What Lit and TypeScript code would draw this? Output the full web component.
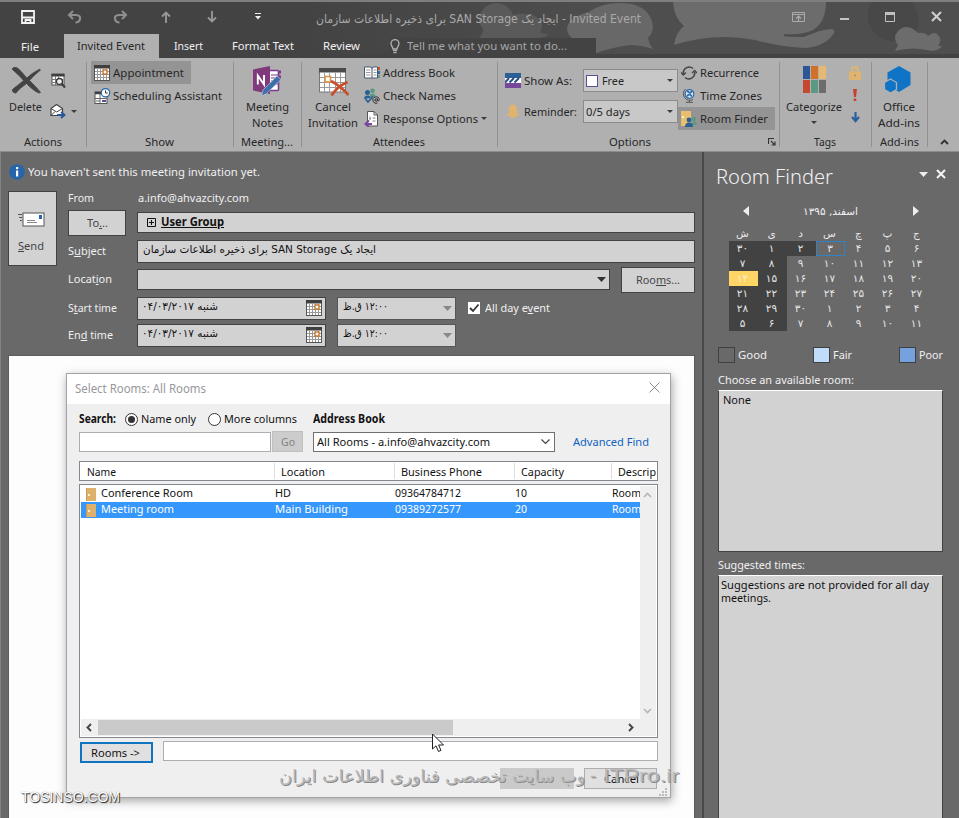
import { LitElement, html, css, svg } from "lit";
import { customElement, property } from "lit/decorators.js";
import { classMap } from "lit/directives/class-map.js";

/* A single line of text condensed or widened to the given width. */
@customElement("fit-text")
class FitText extends LitElement {
  @property({ type: Number }) w = 0;
  static styles = css`
    :host { display: block; flex: none; white-space: nowrap; text-align: left; }
    .in { display: inline-block; transform-origin: 0 50%; }
  `;
  render() {
    return html`<span class="in"><slot></slot></span>`;
  }
  firstUpdated() {
    const el = this.renderRoot.querySelector(".in") as HTMLElement;
    const natural = el.getBoundingClientRect().width;
    this.style.width = this.w + "px";
    if (natural > 0) el.style.transform = `scaleX(${this.w / natural})`;
  }
}

const t = (text: unknown, w: number) => html`<fit-text w=${w}>${text}</fit-text>`;
const fa = (text: unknown, w: number) => html`<fit-text class="fa" w=${w}><span dir="rtl">${text}</span></fit-text>`;

const icon = (w: number, h: number, body: unknown) =>
  html`<svg class="ic" width=${w} height=${h} viewBox="0 0 ${w} ${h}">${body}</svg>`;

const triangle = (w: number, h: number, fill: string) =>
  icon(w, h, svg`<path d="M0 0H${w}L${w / 2} ${h}Z" fill=${fill}/>`);

const calendar = icon(16, 16, svg`
  <rect x=".5" y=".5" width="15" height="15" fill="#fff" stroke="#555"/>
  <rect width="16" height="3.500" fill="#3f3f3f"/>
  <path d="M3.500 4V15M6.500 4V15M9.500 4V15M12.500 4V15M1 6.500H15M1 9.500H15M1 12.500H15" stroke="#999"/>
  <rect x="9" y="5" width="4" height="4" fill="#fff" stroke="#c8762a" stroke-width="1.400"/>`);

const icons = {
  save: icon(14, 14, svg`<path d="M1 1H13V13H1Z" fill="none" stroke="#f3f3f3" stroke-width="1.800"/><path d="M1 7.500H13M4.500 13V10H9.500V13" fill="none" stroke="#f3f3f3" stroke-width="1.800"/>`),
  undo: icon(15, 14, svg`<path d="M6 1L2 5L6 9M2 5H9C12.500 5 13.500 7 13 9C12.500 11 11 12.500 8.500 12.500" fill="none" stroke="#8f8f8f" stroke-width="2.100"/>`),
  redo: icon(15, 14, svg`<path d="M9 1L13 5L9 9M13 5H6C2.500 5 1.500 7 2 9C2.500 11 4 12.500 6.500 12.500" fill="none" stroke="#8f8f8f" stroke-width="2.100"/>`),
  up: icon(10, 12, svg`<path d="M5 12V2M1 5.500L5 1.500L9 5.500" fill="none" stroke="#979797" stroke-width="1.900"/>`),
  down: icon(10, 12, svg`<path d="M5 0V10M1 6.500L5 10.500L9 6.500" fill="none" stroke="#979797" stroke-width="1.900"/>`),
  more: icon(6, 7, svg`<path d="M0 .5H6" stroke="#eee"/><path d="M0 3H6L3 6.500Z" fill="#eee"/>`),
  ribbonOpts: icon(13, 10, svg`<path d="M.5 .5H12.500V9.500H.5ZM.5 2.500H12.500" fill="none" stroke="#aaa"/><path d="M6.500 9V4.500M4 6.500L6.500 4L9 6.500" fill="none" stroke="#aaa" stroke-width="1.200"/>`),
  min: icon(9, 10, svg`<path d="M0 7H9" stroke="#c4c4c4" stroke-width="2"/>`),
  max: icon(10, 10, svg`<path d="M.5 .5H9.500V9.500H.5Z" fill="none" stroke="#c0c0c0"/><path d="M0 1.500H10" stroke="#c0c0c0" stroke-width="3"/>`),
  close: icon(11, 11, svg`<path d="M1 1L10 10M10 1L1 10" stroke="#cfcfcf" stroke-width="2.100"/>`),
  bulb: icon(10, 15, svg`<path d="M3 10C3 8 1 7 1 4.500A4 3.800 0 0 1 9 4.500C9 7 7 8 7 10Z" fill="none" stroke="#b4b4b4" stroke-width="1.300"/><path d="M3 11.700H7M3.500 13.700H6.500" stroke="#b4b4b4" stroke-width="1.300"/>`),
  del: icon(29, 27, svg`<path d="M0 2Q1 .5 3 0C7 1 11 7 15 11C18 8 22 5 27.500 2.200L28.500 3C24 7 20 10 17.500 13.500C21 17 26 22 28.500 25.500L27 26C22 24 18 20 14.500 16.500C10 20 7 22 4 26C2 26 0 25 .5 22.500C3 20 8 17 11.500 13.500C9 10 3 5 0 2Z" fill="#434343" stroke="#434343" stroke-width=".8"/>`),
  calSearch: icon(16, 16, svg`<rect x="2" y="1" width="12" height="11" fill="#fff" stroke="#505050"/><rect x="1.500" y="1" width="13" height="2.500" fill="#3f3f3f"/><path d="M5.500 3V12M8.500 3V12M2 6.500H13M2 9.500H13" stroke="#777"/><circle cx="9.500" cy="8.500" r="3" fill="#eee" stroke="#3c3c3c" stroke-width="1.300"/><path d="M11.500 10.500L15 14.500" stroke="#3c3c3c" stroke-width="2"/>`),
  forward: icon(16, 16, svg`<path d="M1 5.500L6.500 1.500L12.500 5.500V12.500H1Z" fill="#fff" stroke="#444" stroke-width="1.200"/><path d="M1 5.500L6.700 9L12.500 5.500M1 12.500L5 8.500" fill="none" stroke="#444"/><path d="M7 12H14M11 9L14.500 12L11 15" fill="none" stroke="#2b5797" stroke-width="2"/>`),
  sched: icon(17, 16, svg`<rect x="1" y="4" width="12" height="11.500" fill="#fff" stroke="#555"/><path d="M1 5H9" stroke="#3f3f3f" stroke-width="2.500"/><path d="M6 6V15M1 10.500H13M2 13H6" stroke="#666"/><path d="M8 13H12" stroke="#5b4b9b" stroke-width="2"/><circle cx="11.500" cy="4.700" r="4.200" fill="#fff" stroke="#2e6aa8" stroke-width="1.300"/><path d="M11.500 2.300V5H13.700" fill="none" stroke="#333"/>`),
  onenote: icon(29, 31, svg`<rect x="14.500" y="4.500" width="11" height="20" rx="1" fill="#fff" stroke="#7e3a8c" stroke-width="1.600"/><path d="M18 9H25M18 12H25M18 15H25M18 18H25" stroke="#7e3a8c"/><path d="M26 6H28M26 11H28" stroke="#7e3a8c" stroke-width="3"/><path d="M0 3.500L17 0V28L0 24.500Z" fill="#80397b"/><path d="M4.800 18.500V9.500L11 18.500V9" fill="none" stroke="#fff" stroke-width="1.900"/><path d="M10 24L24 10L28 13.500L13.500 27.500L8.500 30Z" fill="#3e6fa8" stroke="#b9c9dd" stroke-width=".7"/>`),
  cancel: icon(30, 28, svg`<rect x=".5" y="1" width="26" height="23" fill="#fff" stroke="#777"/><rect y="0" width="27" height="4.500" fill="#4b4b4b"/><path d="M5.500 5V24M10.500 5V24M16.500 5V24M21.500 5V24M1 9.500H26M1 14.500H26M1 19.500H26" stroke="#999"/><rect x="6" y="8.500" width="5.500" height="5.500" fill="#fff" stroke="#d69547" stroke-width="1.600"/><path d="M12 13C18 16 24 21 29.500 27M28.500 14C22 17 16 22 12.500 27.500" fill="none" stroke="#c8502f" stroke-width="2.800"/>`),
  book: icon(16, 13, svg`<path d="M.5 1H6Q8 1 8 2.500Q8 1 10 1H13.500V12H.5Z" fill="#fff" stroke="#4b5a72"/><path d="M8 2V12" stroke="#4b5a72"/><path d="M2 4H6.500M2 6.500H6.500M2 9H6.500M9.500 4H12.500M9.500 6.500H12.500M9.500 9H12.500" stroke="#999"/><path d="M15 1V4" stroke="#c8502f" stroke-width="2"/><path d="M15 5V8" stroke="#2b6aa8" stroke-width="2"/><path d="M15 9V12" stroke="#5a9a83" stroke-width="2"/>`),
  names: icon(16, 16, svg`<circle cx="8.500" cy="2.800" r="2.300" fill="#5a9a83"/><path d="M5.500 9Q5.500 5.500 8.500 5.500T11.500 9Z" fill="#5a9a83"/><circle cx="3.500" cy="4.500" r="2.500" fill="#2b6096"/><path d="M0 11Q0 7.500 3.500 7.500T6.500 10" fill="#2b6096"/><path d="M1.500 11L4 14L9 8.500" fill="none" stroke="#2b6096" stroke-width="1.800"/><circle cx="12.200" cy="12" r="1.300" fill="none" stroke="#333"/><path d="M13.500 10.700V12.500Q15.500 13.500 15.300 11.500A3.200 3.200 0 1 0 13.500 15" fill="none" stroke="#333"/>`),
  resp: icon(16, 16, svg`<path d="M3.500 .5H10L13.500 4V15H3.500Z" fill="#fff" stroke="#555"/><path d="M10 .5V4H13.500" fill="none" stroke="#555"/><path d="M5.500 7.500H7M6 5.500V9M8.500 7H11.500M8.500 10H11.500" stroke="#888"/><path d="M8 13H1.500M5 9.500L1.500 13L5 16" fill="none" stroke="#76479b" stroke-width="2"/>`),
  showAs: icon(16, 15, svg`<rect width="16" height="5" fill="#2b6096"/><rect y="5" width="16" height="5" fill="#fff"/><path d="M0 9.500L4 5M4.500 9.500L9 5M9.500 9.500L14 5" stroke="#2b5080" stroke-width="2"/><rect y="10" width="16" height="5" fill="#76479b"/>`),
  bell: icon(12, 15, svg`<path d="M0 11C2 10 2 7 2 5C2 2 4 .5 6 .5S10 2 10 5C10 7 10 10 12 11V12H0ZM4 12H8V14H4Z" fill="#e0b46c"/>`),
  recur: icon(16, 14, svg`<path d="M2.300 8A6 6 0 0 1 12 2.500M13.700 6A6 6 0 0 1 4 11.500" fill="none" stroke="#444" stroke-width="1.500"/><path d="M0 6.500L2.300 9L5 6.500M11 7L13.700 4.500L16 7" fill="none" stroke="#444" stroke-width="1.300"/>`),
  globe: icon(12, 15, svg`<circle cx="6.500" cy="6" r="4.300" fill="#dbe7f3" stroke="#2b6aa8" stroke-width="1.200"/><path d="M4 3L7 5L9.500 3M4 8L6.500 6L9 8.500" fill="none" stroke="#2b6aa8" stroke-width="1.700"/><path d="M2.500 1A6.500 6.500 0 0 0 10 11.500M6.500 12V14M3 14.300H10" fill="none" stroke="#555"/>`),
  room: icon(16, 16, svg`<rect x="0" y="0" width="10" height="15" fill="#e9bf6d"/><circle cx="2" cy="6" r="1" fill="#fff"/><circle cx="13" cy="8" r="2.200" fill="#5a9a83"/><path d="M10.500 14Q10.500 10.500 13 10.500T16 14Z" fill="#5a9a83"/><circle cx="8" cy="9" r="2.400" fill="#2b6096"/><path d="M4 16Q4 11.500 8 11.500T12 16Z" fill="#2b6096"/>`),
  categ: icon(23, 27, svg`<rect width="7" height="13" fill="#2b5797"/><rect x="8" width="7" height="13" fill="#d0702a"/><rect x="16" width="7" height="13" fill="#e6b871"/><rect y="14" width="7" height="13" fill="#c5482e"/><rect x="8" y="14" width="7" height="13" fill="#5a9a83"/><rect x="16" y="14" width="7" height="13" fill="#6d6d6d"/>`),
  lock: icon(12, 14, svg`<path d="M3 6V4A3 3 0 0 1 9 4V6" fill="none" stroke="#e0b46c" stroke-width="2"/><rect x="0" y="5.500" width="12" height="8.500" fill="#e0b46c"/><circle cx="6" cy="9.500" r="1" fill="#a88"/>`),
  bang: icon(4, 12, svg`<path d="M0 0H4L3 8H1ZM.7 9.500H3.300V12H.7Z" fill="#c8402c"/>`),
  lowArrow: icon(9, 11, svg`<path d="M4.500 0V9M1 5L4.500 9L8 5" fill="none" stroke="#2b5f9e" stroke-width="2.200"/>`),
  office: icon(27, 28, svg`<path d="M15 0L26.500 6.500V19L15 26L3.500 19V6.500Z" fill="#0f73c6"/><path d="M6.500 13L12.500 16.500V23.500L6.500 27L.5 23.500V16.500Z" fill="#0f73c6" stroke="#b1b0b1" stroke-width="1.300"/>`),
  launcher: icon(8, 8, svg`<path d="M.5 6V.5H6M3 3L7 7M7 3.500V7H3.500" fill="none" stroke="#333" stroke-width="1.100"/>`),
  info: icon(16, 16, svg`<circle cx="8" cy="8" r="7.800" fill="#2566a8"/><rect x="7" y="6.500" width="2.200" height="6" fill="#fff"/><rect x="7" y="3" width="2.200" height="2.200" fill="#fff"/>`),
  mail: icon(28, 15, svg`<path d="M1 2.500H5M2 5.500H5M3 8.500H5" stroke="#555" stroke-width="1.200"/><rect x="6" y="1" width="21" height="13" fill="#fff" stroke="#555"/><rect x="22" y="3" width="3" height="4" fill="#2566a8"/><path d="M10 8.500H18M10 10.500H20" stroke="#888"/>`),
  plus: icon(9, 9, svg`<path d="M.5 .5H8.500V8.500H.5ZM2 4.500H7M4.500 2V7" fill="none" stroke="#111"/>`),
  door: icon(10, 13, svg`<rect width="10" height="13" fill="#ddb16b"/><path d="M0 0V13" stroke="#c99a50" stroke-width="2"/><circle cx="3" cy="7" r="1.100" fill="#fff"/>`),
};

const WEEK = ["ش", "ی", "د", "س", "چ", "پ", "ج"];
const DAYS = [
  ["۳۰", "۱", "۲", "۳", "۴", "۵", "۶"],
  ["۷", "۸", "۹", "۱۰", "۱۱", "۱۲", "۱۳"],
  ["۱۴", "۱۵", "۱۶", "۱۷", "۱۸", "۱۹", "۲۰"],
  ["۲۱", "۲۲", "۲۳", "۲۴", "۲۵", "۲۶", "۲۷"],
  ["۲۸", "۲۹", "۳۰", "۱", "۲", "۳", "۴"],
  ["۵", "۶", "۷", "۸", "۹", "۱۰", "۱۱"],
];
const SUBJECT = "ایجاد یک SAN Storage برای ذخیره اطلاعات سازمان";

@customElement("app-root")
class AppRoot extends LitElement {
  static styles = css`
    :host { display: block; position: relative; width: 959px; height: 818px; overflow: hidden; box-sizing: border-box;
      background: #6a696a; font: 11.5px/16px "Noto Sans", "DejaVu Sans", sans-serif; color: #262626; }
    * { box-sizing: border-box; }
    .ic { display: block; flex: none; }
    .fa { font-family: "DejaVu Sans", sans-serif; font-size: 10.5px; }
    .bold { font-weight: 700; }
    .f { display: flex; align-items: center; }
    .col { display: flex; flex-direction: column; }
    .head { position: relative; height: 58px; background: #444344; border-top: 2px solid #7d7e7d; }
    .art { position: absolute; left: 300px; top: 0; }
    .bar { position: relative; display: flex; height: 32px; align-items: center; padding-left: 5px; }
    .cell { width: 46px; display: flex; justify-content: center; margin-top: -3px; }
    .title { margin: 2px auto 0 35px; color: #a9a9a9; font-size: 12px; }
    .title .fa { font-size: 12px; }
    .tabs { position: relative; display: flex; height: 24px; align-items: center; color: #f1f1f1; }
    .file { padding-left: 21px; width: 64px; padding-top: 2px; }
    .tab { background: #b1b0b1; color: #262626; width: 95px; height: 24px; padding: 4px 0 0 13px; }
    .tell { display: flex; align-items: center; gap: 7px; height: 20px; width: 207px; margin: 4px 0 0 29px; padding: 0 0 4px 1px; background: #444344; color: #a6a6a6; }
    .ribbon { display: flex; height: 93px; background: #b1b0b1; }
    .grp { position: relative; display: flex; flex-direction: column; flex: none; padding-top: 3px; }
    .grp::after { content: ""; position: absolute; right: 0; top: 4px; width: 1px; height: 85px; background: #929192; }
    .grp.open::after { display: none; }
    .cont { height: 73px; display: flex; }
    .cap { display: flex; justify-content: center; height: 16px; padding-right: 2px; }
    .big { display: flex; flex-direction: column; align-items: center; }
    .item { display: flex; align-items: center; height: 23px; gap: 3px; }
    .on { background: #959495; }
    .combo { height: 23px; width: 95px; display: flex; align-items: center; border: 1px solid #8c8b8c; background: #c9c8c9; padding: 0 4px 0 2px; }
    .sq { width: 12px; height: 12px; border: 1px solid #57509a; background: #fff; margin-right: 4px; }
    .sp { flex: 1; }
    .main { display: flex; height: 667px; border-top: 1px solid #8d8c8d; }
    .left { width: 702px; border-left: 1px solid #858485; color: #f0f0f0; padding-left: 7px; }
    .info { height: 33px; padding: 6px 0 0 1px; gap: 3px; }
    .form { display: flex; height: 170px; }
    .send { width: 49px; height: 75px; margin-top: 6px; align-items: center; border: 1px solid #434243; background: #d3d2d3; color: #444; padding: 20px 4px 0 0; gap: 11px; }
    .rows { margin-left: 11px; margin-top: 3px; }
    .row { display: flex; align-items: center; }
    .lbl { width: 69px; flex: none; margin-top: -1px; }
    .btn { display: flex; align-items: center; justify-content: center; border: 1px solid #434243; background: #d3d2d3; color: #444; height: 26px; }
    .box { display: flex; align-items: center; border: 1px solid #434243; background: #d3d2d3; color: #111; }
    .up { margin-top: -1px; } .dn { margin-top: 1px; }
    .box .fa { margin-top: -3px; font-size: 11px; }
    .box .bold { margin-top: -1px; }
    .box .ic { margin-top: -1px; }
    .check { width: 12px; height: 12px; background: #fff; margin: 0 5px 0 12px; }
    .page { width: 687px; height: 463px; background: #fdfdfe; border: 1px solid #5d5c5d; border-bottom: 0; }
    .pane { width: 257px; border-left: 2px solid #4a494a; padding: 2px 0 0 14px; color: #f0f0f0; }
    .ptitle { height: 43px; font-size: 20.5px; line-height: 28px; margin-left: -2px; font-weight: 300; }
    .ptitle .ic { margin-top: -3px; }
    .nav { height: 28px; padding-left: 25px; }
    .cal { display: grid; grid-template-columns: repeat(7, 29px); grid-auto-rows: 15px; margin: 1px 0 0 11px; }
    .d { display: flex; align-items: center; justify-content: center; font: 10.5px/13px "DejaVu Sans", sans-serif; color: #e6e6e6; padding: 0 2px 1px 0; }
    .dark { background: #434243; }
    .sel { background: #ffd566; color: #fff1c8; }
    .today { border: 1px solid #3182c4; padding: 0 1px 0 0; }
    .leg { height: 17px; margin-top: 15px; margin-bottom: 1px; }
    .sw { width: 17px; height: 16px; border: 1px solid #414041; margin-right: 3px; flex: none; }
    .fair { background: #c1dcfb; } .poor { background: #75a2df; }
    .list { width: 225px; background: #d3d2d3; border: 1px solid #434243; border-top: 1px solid #fff; color: #111; line-height: 13px; }
    .dlg { position: absolute; left: 66px; top: 373px; width: 605px; height: 425px; border: 1px solid #a2a2a8; background: #f0eff0; box-shadow: 1px 3px 9px rgba(0,0,0,.35); color: #111; }
    .dt { display: flex; justify-content: space-between; align-items: center; height: 30px; background: #fff; color: #98989c; padding: 0 10px 0 8px; font-size: 12px; }
    .dt .ic { margin-top: -3px; }
    .srch { height: 30px; padding-left: 12px; }
    .radio { width: 13px; height: 13px; border: 1px solid #333; border-radius: 50%; background: #fff; display: flex; align-items: center; justify-content: center; }
    .radio.ch::after { content: ""; width: 7px; height: 7px; border-radius: 50%; background: #333; }
    .in { border: 1px solid #abadb3; background: #fff; height: 20px; }
    .go { height: 21px; background: #ccc; color: #838383; border: 1px solid #c0c0c0; }
    .dd { height: 20px; border: 1px solid #707070; background: #fff; padding: 0 4px 0 3px; justify-content: space-between; }
    .thead { margin: 9px 0 0 12px; width: 579px; height: 20px; border: 1px solid #828790; background: #fff; overflow: hidden; }
    .th { flex: none; height: 16px; border-right: 1px solid #ddd; padding-top: 1px; }
    .tbl { margin: 3px 0 0 12px; width: 579px; height: 254px; border: 1px solid #828790; background: #fff; padding: 1px 2px 2px 1px; display: grid; grid-template: 233px 17px / 559px 16px; }
    .tr { height: 16px; overflow: hidden; }
    .tr.hl { background: #3596fc; color: #fff; }
    .tr fit-text { margin-top: -2px; }
    .td { flex: none; }
    .sb { background: #f0eff0; }
    .thumb { width: 355px; height: 15px; background: #cbcacb; }
    .wm { position: absolute; left: 279px; top: 764px; display: flex; gap: 5px; font: 19px/24px "Liberation Sans", sans-serif; color: #b9b9b9; text-shadow: 1px 1px 0 #8a8a8a; }
    .wm .fa { font-size: 17px; }
    .ts { position: absolute; left: 21px; top: 788px; font: 15px/18px "Liberation Sans", sans-serif; color: #fff; text-shadow: 1px 1px 1px #222, 0 0 1px #777; }
    .cur { position: absolute; left: 431px; top: 733px; }
  `;

  header() {
    return html`<div class="head">
      <svg class="art" width="659" height="56" viewBox="300 2 659 56">
        <defs><linearGradient id="bg"><stop offset="0" stop-color="#444344"/><stop offset=".5" stop-color="#4f4e4f"/><stop offset="1" stop-color="#4f4e4f"/></linearGradient></defs>
        <path d="M300 2H959V54H300Z" fill="url(#bg)"/>
        <path d="M872 2H912Q925 20 912 36Q895 48 875 34Q862 18 872 2Z" fill="#494849"/>
        <path d="M483 29Q476 20 481 12Q487 3 497 3Q509 4 513 15Q526 12 535 16Q546 22 540 33L549 34Q546 38 535 38L479 38Q483 34 483 29Z" fill="#5b5a5b"/>
        <path d="M567 28Q570 16 589 12Q600 3 622 3Q650 4 653 26Q653 33 648 38Q649 44 653 49Q640 45 630 45Q614 47 596 53V38H572Q567 34 567 28Z" fill="#696869"/>
        <path d="M673 2H826Q826 22 813 30Q804 35 784 34Q784 37 804 37Q818 30 831 29Q835 29 834 33Q826 46 806 48Q780 47 755 40Q715 32 674 45Q676 32 684 26Q674 18 673 2Z" fill="#6d6c6d"/>
        <path d="M784 35.500Q805 38 818 30" fill="none" stroke="#4f4e4f" stroke-width="1.500"/>
        <path d="M895 51L898 45Q892 38 898 31Q907 22 918 33Q925 32 928 36Q936 29 940 38Q941 42 938 46H942Q940 50 932 51Q912 46 895 51Z" fill="#6d6c6d"/>
      </svg>
      <div class="bar">
        ${[icons.save, icons.undo, icons.redo, icons.up, icons.down, icons.more].map((i) => html`<div class="cell">${i}</div>`)}
        <div class="title">${fa("Invited Event - " + SUBJECT, 325)}</div>
        ${[icons.ribbonOpts, icons.min, icons.max, icons.close].map((i) => html`<div class="cell">${i}</div>`)}
      </div>
      <div class="tabs">
        <div class="file">${t("File", 18)}</div>
        <div class="tab">${t("Invited Event", 68)}</div>
        <div style="margin-left:15px">${t("Insert", 29)}</div>
        <div style="margin-left:29px">${t("Format Text", 62)}</div>
        <div style="margin-left:29px">${t("Review", 37)}</div>
        <div class="tell">${icons.bulb}${t("Tell me what you want to do...", 160)}</div>
      </div>
    </div>`;
  }

  ribbon() {
    const dn = triangle(6, 3, "#3c3c3c");
    return html`<div class="ribbon">
      <div class="grp" style="width:87px">
        <div class="cont">
          <div class="col" style="padding:6px 0 0 9px;gap:5px"><div style="padding-left:3px">${icons.del}</div>${t("Delete", 33)}</div>
          <div class="col" style="padding:12px 0 0 8px;gap:14px">${icons.calSearch}<div class="f" style="gap:5px">${icons.forward}${dn}</div></div>
        </div>
        <div class="cap">${t("Actions", 38)}</div>
      </div>
      <div class="grp" style="width:147px">
        <div class="cont col" style="padding-left:4px">
          <div class="item on" style="width:100px;padding-left:3px">${calendar}${t("Appointment", 71)}</div>
          <div class="item" style="padding-left:3px">${icons.sched}<div style="margin-left:-1px">${t("Scheduling Assistant", 109)}</div></div>
        </div>
        <div class="cap">${t("Show", 29)}</div>
      </div>
      <div class="grp" style="width:68px">
        <div class="cont big" style="padding:5px 2px 0 0">${icons.onenote}<div style="height:2px"></div>${t("Meeting", 43)}${t("Notes", 31)}</div>
        <div class="cap">${t("Meeting...", 52)}</div>
      </div>
      <div class="grp" style="width:196px">
        <div class="cont">
          <div class="big" style="padding-top:7px;width:62px"><div style="padding-left:2px">${icons.cancel}</div><div style="height:3px"></div>${t("Cancel", 36)}${t("Invitation", 50)}</div>
          <div>
            <div class="item">${icons.book}${t("Address Book", 72)}</div>
            <div class="item">${icons.names}${t("Check Names", 73)}</div>
            <div class="item">${icons.resp}${t("Response Options", 95)}${dn}</div>
          </div>
        </div>
        <div class="cap">${t("Attendees", 52)}</div>
      </div>
      <div class="grp" style="width:282px">
        <div class="cont">
          <div class="col" style="padding:8px 0 0 7px;gap:8px">
            <div class="f">${icons.showAs}<div style="width:62px;padding-left:3px">${t("Show As:", 48)}</div>
              <div class="combo"><span class="sq"></span>${t("Free", 22)}<span class="sp"></span>${dn}</div></div>
            <div class="f"><div style="padding:0 2px">${icons.bell}</div><div style="width:62px;padding-left:3px">${t("Reminder:", 53)}</div>
              <div class="combo">${t("0/5 days", 44)}<span class="sp"></span>${dn}</div></div>
          </div>
          <div>
            <div class="item" style="padding-left:3px">${icons.recur}${t("Recurrence", 59)}</div>
            <div class="item" style="padding-left:5px">${icons.globe}<div style="margin-left:2px">${t("Time Zones", 62)}</div></div>
            <div class="item on" style="width:97px;padding-left:3px">${icons.room}${t("Room Finder", 68)}</div>
          </div>
        </div>
        <div class="cap" style="padding:0 4px 0 111px;justify-content:space-between;align-items:center">${t("Options", 42)}${icons.launcher}</div>
      </div>
      <div class="grp" style="width:92px">
        <div class="cont">
          <div class="big" style="padding:5px 0 0 6px">${icons.categ}<div style="height:6px"></div>${t("Categorize", 56)}<div style="height:6px"></div>${dn}</div>
          <div class="big" style="padding:5px 0 0 7px;gap:10px">${icons.lock}<div style="margin-top:-1px">${icons.bang}</div><div style="margin-top:1px">${icons.lowArrow}</div></div>
        </div>
        <div class="cap">${t("Tags", 22)}</div>
      </div>
      <div class="grp" style="width:56px">
        <div class="cont big" style="padding:5px 2px 0 0"><div style="margin-left:-3px">${icons.office}</div><div style="height:5px"></div>${t("Office", 32)}${t("Add-ins", 42)}</div>
        <div class="cap">${t("Add-ins", 39)}</div>
      </div>
      <div class="grp open" style="width:31px">
        <div style="padding:78px 0 0 12px">${icon(9, 6, svg`<path d="M1 5L4.500 1.500L8 5" fill="none" stroke="#333" stroke-width="1.900"/>`)}</div>
      </div>
    </div>`;
  }

  dateRow(label: unknown, w: number, h: number, check: boolean) {
    const box = classMap({ box: true, dn: check });
    return html`<div class="row" style="height:${h}px">
      <div class="lbl">${t(label, w)}</div>
      <div class=${box} style="width:189px;height:23px;padding:0 3px 0 4px;justify-content:space-between"><fit-text class="fa" w="76"><bdo dir="ltr">۰۴/۰۳/۲۰۱۷</bdo> <span>شنبه</span></fit-text>${calendar}</div>
      <div class=${box} style="width:119px;height:23px;margin-left:11px;padding:0 3px 0 5px;justify-content:space-between;border-color:#555"><fit-text class="fa" w="45"><span dir="ltr"><bdi>ق.ظ</bdi>&nbsp;<bdo dir="ltr">۱۲:۰۰</bdo></span></fit-text>${triangle(9, 5, "#8a898a")}</div>
      ${check ? html`<div class="check">${icon(12, 12, svg`<path d="M2 6L5 9L10.500 2.500" fill="none" stroke="#333" stroke-width="1.800"/>`)}</div>${t(html`All day e<u>v</u>ent`, 65)}` : ""}
    </div>`;
  }

  form() {
    return html`<div class="left">
      <div class="f info">${icons.info}${t("You haven't sent this meeting invitation yet.", 232)}</div>
      <div class="form">
        <div class="send col">${icons.mail}${t(html`<u>S</u>end`, 26)}</div>
        <div class="rows">
          <div class="row" style="height:21px"><div class="lbl" style="width:70px">${t("From", 26)}</div><div class="up">${t("a.info@ahvazcity.com", 111)}</div></div>
          <div class="row" style="height:28px"><div class="btn" style="width:58px;margin-right:11px">${t(html`To<u>.</u>..`, 21)}</div>
            <div class="box up" style="width:558px;height:21px;padding-left:9px;gap:5px">${icons.plus}<div class="bold">${t(html`<u>User Group</u>`, 63)}</div></div></div>
          <div class="row" style="height:28px"><div class="lbl">${t(html`S<u>u</u>bject`, 38)}</div>
            <div class="box dn" style="width:558px;height:23px;padding-left:5px">${fa(SUBJECT, 233)}</div></div>
          <div class="row" style="height:29px"><div class="lbl">${t(html`Locat<u>i</u>on`, 44)}</div>
            <div class="box" style="width:473px;height:21px;padding-right:3px;justify-content:flex-end">${triangle(9, 5, "#333")}</div>
            <div class="btn dn" style="width:74px;margin-left:11px">${t(html`Roo<u>m</u>s...`, 44)}</div></div>
          ${this.dateRow(html`S<u>t</u>art time`, 49, 28, true)}
          ${this.dateRow(html`En<u>d</u> time`, 45, 27, false)}
        </div>
      </div>
      <div class="page"></div>
    </div>`;
  }

  pane() {
    return html`<div class="pane">
      <div class="f ptitle">${t("Room Finder", 117)}<div style="width:86px"></div>${triangle(9, 5, "#eee")}
        <div style="padding-left:8px">${icon(10, 10, svg`<path d="M1 1L9 9M9 1L1 9" stroke="#f5f5f5" stroke-width="2"/>`)}</div></div>
      <div class="f nav">${icon(6, 10, svg`<path d="M6 0V10L0 5Z" fill="#eee"/>`)}
        <div style="margin:0 55px 0 54px">${fa("اسفند, ۱۳۹۵", 55)}</div>${icon(6, 10, svg`<path d="M0 0V10L6 5Z" fill="#eee"/>`)}</div>
      <div class="cal">
        ${WEEK.map((d) => html`<div class="d">${d}</div>`)}
        ${DAYS.map((r, y) => r.map((d, x) => html`<div class=${classMap({ d: true, dark: x < 2 || (y === 0 && x === 2), sel: y === 2 && x === 0, today: y === 0 && x === 3 })}>${d}</div>`))}
      </div>
      <div class="f leg"><span class="sw"></span>${t("Good", 29)}<div style="width:46px"></div><span class="sw fair"></span>${t("Fair", 19)}<div style="width:47px"></div><span class="sw poor"></span>${t("Poor", 24)}</div>
      <div style="margin:9px 0 2px">${t("Choose an available room:", 136)}</div>
      <div class="list" style="height:162px;padding:2px 0 0 4px">${t("None", 28)}</div>
      <div style="margin:5px 0 2px">${t("Suggested times:", 87)}</div>
      <div class="list" style="height:250px;padding:2px 0 0 2px">${t("Suggestions are not provided for all day", 208)}${t("meetings.", 50)}</div>
    </div>`;
  }

  dialog() {
    const rows = [
      ["Conference Room", 92, "HD", 16, "09364784712", 66, "10", 12],
      ["Meeting room", 73, "Main Building", 73, "09389272577", 66, "20", 12],
    ] as [string, number, string, number, string, number, string, number][];
    const heads: [string, number, number, number][] = [["Name", 29, 195, 7], ["Location", 44, 120, 6], ["Business Phone", 81, 120, 6], ["Capacity", 43, 97, 6], ["Descrip", 38, 60, 6]];
    return html`<div class="dlg">
      <div class="dt">${t("Select Rooms: All Rooms", 131)}${icon(11, 11, svg`<path d="M.5 .5L10.500 10.500M10.500 .5L.5 10.500" stroke="#8a8a8e"/>`)}</div>
      <div class="f srch"><div class="bold">${t("Search:", 37)}</div><span class="radio ch" style="margin:0 3px 0 9px"></span>${t("Name only", 55)}
        <span class="radio" style="margin:0 3px 0 12px"></span>${t("More columns", 73)}<div class="bold" style="margin-left:16px">${t("Address Book", 72)}</div></div>
      <div class="f" style="padding-left:12px;margin-top:-3px;height:21px"><span class="in" style="width:192px"></span>
        <div class="f go" style="width:31px;margin:0 10px 0 1px;padding-left:8px">${t("Go", 14)}</div>
        <div class="f dd" style="width:242px">${t("All Rooms - a.info@ahvazcity.com", 173)}${icon(9, 6, svg`<path d="M.5 .5L4.500 4.500L8.500 .5" fill="none" stroke="#444" stroke-width="1.200"/>`)}</div>
        <div style="margin-left:18px;color:#0f62c0">${t("Advanced Find", 76)}</div></div>
      <div class="f thead">${heads.map(([n, w, c, p]) => html`<div class="th" style="width:${c}px;padding-left:${p}px">${t(n, w)}</div>`)}</div>
      <div class="tbl">
        <div>${rows.map((r, i) => html`<div class=${classMap({ f: true, tr: true, hl: i === 1 })}>
            <div style="padding:0 5px 0 5px">${icons.door}</div>
            <div class="td" style="width:174px">${t(r[0], r[1])}</div><div class="td" style="width:120px">${t(r[2], r[3])}</div>
            <div class="td" style="width:120px">${t(r[4], r[5])}</div><div class="td" style="width:97px">${t(r[6], r[7])}</div>${t("Room", 29)}</div>`)}</div>
        <div class="sb col" style="justify-content:space-between;align-items:center;padding:6px 1px 5px 0">
          ${icon(9, 6, svg`<path d="M1 5L4.500 1.500L8 5" fill="none" stroke="#b4b4b8" stroke-width="1.600"/>`)}
          ${icon(9, 6, svg`<path d="M1 1L4.500 4.500L8 1" fill="none" stroke="#b4b4b8" stroke-width="1.600"/>`)}</div>
        <div class="sb f" style="grid-column:1/3;padding:0 22px 0 5px">${icon(6, 9, svg`<path d="M5 1L1.500 4.500L5 8" fill="none" stroke="#444" stroke-width="1.900"/>`)}
          <div class="thumb" style="margin-left:6px"></div><span class="sp"></span>${icon(6, 9, svg`<path d="M1 1L4.500 4.500L1 8" fill="none" stroke="#444" stroke-width="1.900"/>`)}</div>
      </div>
      <div class="f" style="padding:4px 0 0 13px"><div class="f" style="width:73px;height:21px;border:2px solid #0f73c0;background:#e1e0e1;padding-left:9px">${t("Rooms ->", 49)}</div>
        <span class="in" style="width:495px;margin-left:10px;margin-top:-3px"></span></div>
      <div class="f" style="padding:5px 0 0 433px"><div style="width:74px;height:21px;background:#cbcacb"></div>
        <div class="f" style="width:73px;height:21px;margin-left:10px;border:1px solid #adadad;background:#e1e0e1;padding-left:19px">${t("Cancel", 35)}</div>
        <div style="margin:18px 0 -10px 2px">${icon(9, 9, svg`<path d="M6 1H8M3 4H5M6 4H8M0 7H2M3 7H5M6 7H8" stroke="#bbb" stroke-width="2"/>`)}</div></div>
    </div>`;
  }

  render() {
    return html`${this.header()}${this.ribbon()}
      <div class="main">${this.form()}${this.pane()}</div>
      ${this.dialog()}
      <div class="cur">${icon(14, 20, svg`<path d="M1.500 1V16L5 12.800L7.500 18.500L10 17.400L7.600 12H12.500Z" fill="#fff" stroke="#222"/>`)}</div>
      <div class="wm">${fa("وب سایت تخصصی فناوری اطلاعات ایران", 306)}${t("-", 6)}<div style="margin-left:2px">${t("ITPro.ir", 76)}</div></div>
      <div class="ts">${t("TOSINSO.COM", 99)}</div>`;
  }
}
